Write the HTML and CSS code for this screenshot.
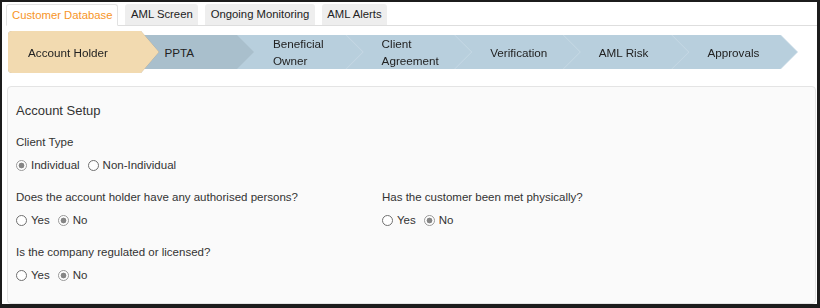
FILE: index.html
```html
<!DOCTYPE html>
<html lang="en">

<head>
    <meta charset="UTF-8">
    <meta name="viewport" content="width=device-width, initial-scale=1.0">
    <title>Customer Database</title>
    <link rel="stylesheet" href="styles.css">
</head>

<body>
    <div class="frame">
        <ul class="tabs">
            <li class="tab active">Customer Database</li>
            <li class="tab">AML Screen</li>
            <li class="tab">Ongoing Monitoring</li>
            <li class="tab">AML Alerts</li>
        </ul>

        <div class="steps">
            <div class="step current">
                <div class="step-body">Account Holder</div>
            </div>
            <div class="step done">
                <div class="step-body">PPTA</div>
            </div>
            <div class="step">
                <div class="step-body">Beneficial<br>Owner</div>
            </div>
            <div class="step">
                <div class="step-body">Client<br>Agreement</div>
            </div>
            <div class="step">
                <div class="step-body">Verification</div>
            </div>
            <div class="step">
                <div class="step-body">AML Risk</div>
            </div>
            <div class="step">
                <div class="step-body">Approvals</div>
            </div>
        </div>

        <div class="panel">
            <h3 class="panel-title">Account Setup</h3>

            <div class="fields">
                <div class="field">
                    <div class="field-label">Client Type</div>
                    <div class="options">
                        <label class="option"><input type="radio" name="client-type" checked>Individual</label>
                        <label class="option"><input type="radio" name="client-type">Non-Individual</label>
                    </div>
                </div>
                <div class="field"></div>

                <div class="field">
                    <div class="field-label">Does the account holder have any authorised persons?</div>
                    <div class="options">
                        <label class="option"><input type="radio" name="authorised">Yes</label>
                        <label class="option"><input type="radio" name="authorised" checked>No</label>
                    </div>
                </div>
                <div class="field">
                    <div class="field-label">Has the customer been met physically?</div>
                    <div class="options">
                        <label class="option"><input type="radio" name="met">Yes</label>
                        <label class="option"><input type="radio" name="met" checked>No</label>
                    </div>
                </div>

                <div class="field">
                    <div class="field-label">Is the company regulated or licensed?</div>
                    <div class="options">
                        <label class="option"><input type="radio" name="regulated">Yes</label>
                        <label class="option"><input type="radio" name="regulated" checked>No</label>
                    </div>
                </div>
            </div>
        </div>
    </div>
</body>

</html>
```

FILE: styles.css
```css
body {
    margin: 0;
    padding: 0;
    background-color: #fff;
    font-family: "Liberation Sans", Arial, sans-serif;
    color: #333;
}

.frame {
    width: 820px;
    height: 308px;
    box-sizing: border-box;
    border-style: solid;
    border-color: #1c1c1c;
    border-width: 2px 3px 4px 2px;
    padding: 2px 1px 0 5px;
    display: flex;
    flex-direction: column;
    overflow: hidden;
}

/* ------------------Tabs------------------- */
.tabs {
    list-style: none;
    margin: 0 -1px 0 -1px;
    padding: 0;
    display: flex;
    gap: 7px;
    height: 21px;
    flex-shrink: 0;
    border-bottom: 1px solid #dedede;
}

.tab {
    height: 21px;
    line-height: 21px;
    padding: 0 5.5px;
    font-size: 11.3px;
    color: #222;
    background-color: #eee;
    border-radius: 3px 3px 0 0;
}

.tab.active {
    box-sizing: border-box;
    height: 22px;
    line-height: 20px;
    padding: 0 5px;
    color: #f7951f;
    background-color: #fff;
    border: 1px solid #e2e2e2;
    border-bottom: 1px solid #fff;
}

/* ------------------Steps------------------- */
.steps {
    display: flex;
    align-items: center;
    height: 42px;
    flex-shrink: 0;
    margin-top: 5px;
    margin-left: 1px;
}

.step {
    position: relative;
    margin-left: -17px;
    filter: drop-shadow(1px 0 0 #c6d8e4);
}

.step-body {
    box-sizing: border-box;
    width: 125.6px;
    height: 34px;
    padding-left: 36px;
    display: flex;
    align-items: center;
    font-size: 11.7px;
    line-height: 17px;
    color: #222;
    background-color: #b8cfdd;
    clip-path: polygon(0 0, calc(100% - 17px) 0, 100% 50%, calc(100% - 17px) 100%, 0 100%);
}

.step.current {
    margin-left: 0;
    z-index: 10;
    filter: drop-shadow(0 0 0.6px rgba(0, 0, 0, 0.35));
}

.step.current .step-body {
    width: 151px;
    height: 42px;
    padding-left: 20px;
    background-color: #f2dab0;
    clip-path: path('M4 0 H133 L151 21 L133 42 H4 Q0 42 0 38 V4 Q0 0 4 0 Z');
}

.step.done {
    margin-left: -30.6px;
    z-index: 9;
    filter: none;
}

.step.done .step-body {
    background-color: #a9bfcc;
}

.step:nth-child(3) { z-index: 8; }
.step:nth-child(4) { z-index: 7; }
.step:nth-child(5) { z-index: 6; }
.step:nth-child(6) { z-index: 5; }
.step:nth-child(7) { z-index: 4; }

/* ------------------Panel------------------- */
.panel {
    flex: 1;
    margin-top: 13px;
    padding: 15px 8px 0 8px;
    background-color: #fafafa;
    border: 1px solid #e4e4e4;
    border-radius: 4px;
}

.panel-title {
    margin: 0;
    font-size: 13px;
    font-weight: normal;
    line-height: 17px;
    color: #333;
}

.fields {
    margin-top: 15px;
    display: grid;
    grid-template-columns: 366px 1fr;
    row-gap: 16px;
}

.field-label {
    font-size: 11.5px;
    line-height: 16px;
    color: #333;
}

.options {
    margin-top: 7px;
    display: flex;
    gap: 8px;
    height: 16px;
}

.option {
    display: inline-flex;
    align-items: center;
    font-size: 11.5px;
    line-height: 16px;
    color: #333;
}

.option input {
    appearance: none;
    -webkit-appearance: none;
    width: 11px;
    height: 11px;
    margin: 0 4px 0 0;
    border: 1px solid #707070;
    border-radius: 50%;
    background-color: #fff;
}

.option input:checked {
    border-color: #999;
    background: radial-gradient(circle, #858585 0 2.6px, #fff 3.2px);
}
```
